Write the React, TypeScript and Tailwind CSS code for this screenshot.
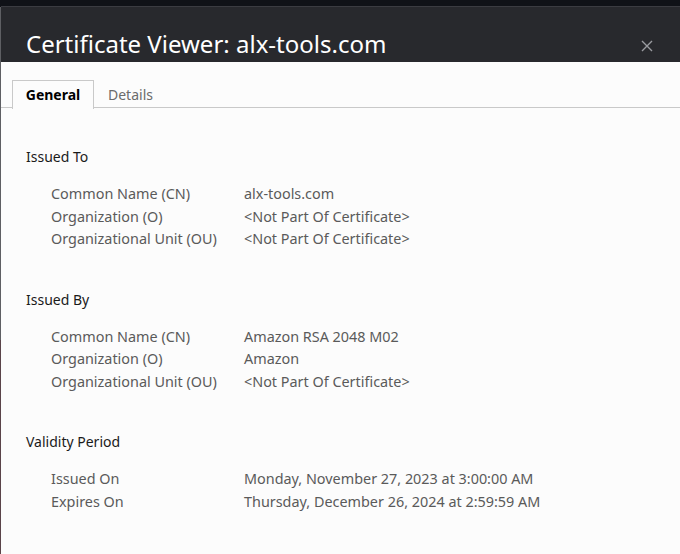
const font = { fontFamily: '"Noto Sans", "Open Sans", sans-serif' };

type Row = { label: string; value: string };

const sections: { title: string; rows: Row[] }[] = [
  {
    title: "Issued To",
    rows: [
      { label: "Common Name (CN)", value: "alx-tools.com" },
      { label: "Organization (O)", value: "<Not Part Of Certificate>" },
      { label: "Organizational Unit (OU)", value: "<Not Part Of Certificate>" },
    ],
  },
  {
    title: "Issued By",
    rows: [
      { label: "Common Name (CN)", value: "Amazon RSA 2048 M02" },
      { label: "Organization (O)", value: "Amazon" },
      { label: "Organizational Unit (OU)", value: "<Not Part Of Certificate>" },
    ],
  },
  {
    title: "Validity Period",
    rows: [
      { label: "Issued On", value: "Monday, November 27, 2023 at 3:00:00 AM" },
      { label: "Expires On", value: "Thursday, December 26, 2024 at 2:59:59 AM" },
    ],
  },
];

function Section({ title, rows }: { title: string; rows: Row[] }) {
  return (
    <div className="flex flex-col">
      <div className="h-[22px] text-[14px] leading-[22px] text-[#1a1a1a]">{title}</div>
      <div className="mt-[15px] flex flex-col pl-[25px]">
        {rows.map((r) => (
          <div key={r.label} className="flex h-[22.5px] items-center text-[14.4px] text-[#5a5a5a]">
            <span className="w-[193px] shrink-0">{r.label}</span>
            <span>{r.value}</span>
          </div>
        ))}
      </div>
    </div>
  );
}

export default function App() {
  return (
    <div className="flex h-[554px] w-[680px] overflow-hidden bg-[#101217]" style={font}>
      <div className="mt-[7px] flex w-[1px] shrink-0 flex-col">
        <div className="h-[333px] bg-[#5e5f63]" />
        <div className="flex-1 bg-[#5a4449]" />
      </div>
      <div className="flex flex-1 flex-col">
        <div className="h-[6px] bg-[#101217]" />
        <div className="h-[1px] bg-[#3b3c41]" />
        <div className="flex h-[55px] items-end justify-between bg-[#28292d] pl-[25px] pr-[27px]">
          <div className="pb-[1px] text-[24px] leading-[34px] text-white">Certificate Viewer: alx-tools.com</div>
          <svg width="12" height="12" viewBox="0 0 12 12" className="mb-[10px]">
            <path d="M1 1L11 11M11 1L1 11" stroke="#9b9ca1" strokeWidth="1.4" />
          </svg>
        </div>
        <div className="flex flex-1 flex-col bg-[#fcfcfc]">
          <div className="mt-[18px] flex h-[28px] border-b border-[#c9c9c9] pl-[11px]">
            <div className="-mb-[1px] flex h-[29px] w-[82px] items-center justify-center border border-b-0 border-[#c9c9c9] bg-[#fcfcfc] pb-[1px] text-[14px] font-bold text-black">
              General
            </div>
            <div className="flex items-center px-[14px] pt-[1px] text-[14px] text-[#6b6b6b]">Details</div>
          </div>
          <div className="flex flex-col gap-[38px] pl-[25px] pt-[38px]">
            {sections.map((s) => (
              <Section key={s.title} title={s.title} rows={s.rows} />
            ))}
          </div>
        </div>
      </div>
    </div>
  );
}
